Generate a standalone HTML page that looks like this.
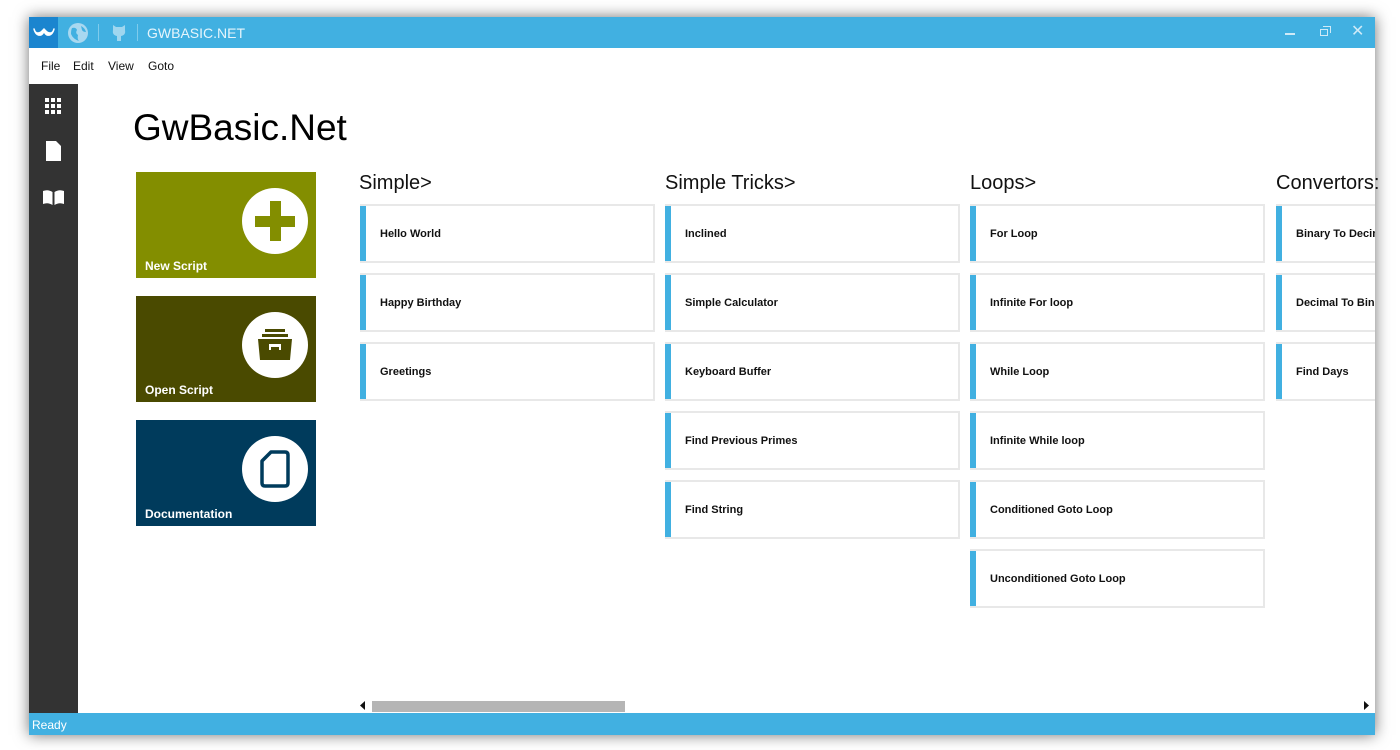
<!DOCTYPE html>
<html><head><meta charset="utf-8"><style>
*{margin:0;padding:0;box-sizing:border-box}
body{width:1400px;height:750px;background:#fff;position:relative;overflow:hidden;font-family:"Segoe UI","Liberation Sans",sans-serif}
.win{position:absolute;left:29px;top:17px;width:1346px;height:718px;background:#fff;box-shadow:0 0 14px rgba(0,0,0,.55)}
.title{position:absolute;left:0;top:0;width:1346px;height:31px;background:#41b0e1}
.menu{position:absolute;top:31px;left:0;height:36px;width:100%;font-size:12px;color:#111}
.menu span{position:absolute;top:11px}
.side{position:absolute;left:0;top:67px;width:49px;height:629px;background:#333}
.status{position:absolute;left:0;top:696px;width:1346px;height:22px;background:#41b0e1;color:#fff;font-size:12px;padding:5px 3px 0}
.abs{position:absolute}
.tile{position:absolute;left:107px;width:180px;height:106px;color:#fff;font-size:12px;font-weight:bold}
.tile .lbl{position:absolute;left:9px;bottom:5px}
.circ{position:absolute;left:106px;top:16px;width:66px;height:66px;border-radius:50%;background:#fff}
.h{position:absolute;top:155px;font-size:20px;color:#111;white-space:nowrap}
.card{position:absolute;width:295px;height:59px;border:2px solid #e8e8e8;border-left:none;background:#fff;font-size:11px;font-weight:bold;color:#111;white-space:nowrap;overflow:hidden}
.card:before{content:"";position:absolute;left:0;top:-2px;bottom:-2px;width:6px;background:#41b0e1}
.card span{position:absolute;left:20px;top:22px}
</style></head><body>
<div class="win">
<div class="title">
 <div class="abs" style="left:0;top:0;width:29px;height:31px;background:#1b85cf"></div>
 <svg class="abs" style="left:4px;top:10px" width="22" height="11" viewBox="0 0 22 11"><path d="M1 2 Q3 9 8 8 Q10 7 11 4 Q12 7 14 8 Q19 9 21 2 Q20 6 17 6 Q14 6 11 2 Q8 6 5 6 Q2 6 1 2Z" fill="#fff" stroke="#fff" stroke-width="1.5" stroke-linejoin="round"/></svg>
 <svg class="abs" style="left:38px;top:5px" width="22" height="22" viewBox="0 0 22 22"><circle cx="11" cy="11" r="10" fill="#a8d8f0"/><path d="M5 6 Q9 5 10 8 Q8 11 11 13 Q10 17 12 19 Q6 17 4 12 Q4 8 5 6Z M14 4 Q18 6 19 10 Q16 10 15 8Z" fill="#41b0e1"/></svg>
 <div class="abs" style="left:69px;top:7px;width:1px;height:17px;background:#7fcbec"></div>
 <svg class="abs" style="left:82px;top:7px" width="16" height="18" viewBox="0 0 16 18"><path d="M2 1 L5 3 H11 L14 1 L14 6 Q15 11 10 12 V17 H6 V12 Q1 11 2 6Z" fill="#9fd6ef"/></svg>
 <div class="abs" style="left:108px;top:7px;width:1px;height:17px;background:#7fcbec"></div>
 <div class="abs" style="left:118px;top:8px;font-size:14px;color:#e6f5fc">GWBASIC.NET</div>
 <div class="abs" style="left:1256px;top:16px;width:10px;height:2px;background:#cfeaf7"></div>
 <div class="abs" style="left:1291px;top:12px;width:8px;height:7px;border:1px solid #cfeaf7"></div>
 <div class="abs" style="left:1294px;top:9px;width:8px;height:7px;border-top:1px solid #cfeaf7;border-right:1px solid #cfeaf7"></div>
 <div class="abs" style="left:1322px;top:4px;font-size:16px;color:#cfeaf7">✕</div>
</div>
<div class="menu"><span style="left:12px">File</span><span style="left:44px">Edit</span><span style="left:79px">View</span><span style="left:119px">Goto</span></div>
<div class="side">
 <svg class="abs" style="left:16px;top:14px" width="17" height="17" viewBox="0 0 17 17" fill="#fff"><rect x="0" y="0" width="4" height="4"/><rect x="6" y="0" width="4" height="4"/><rect x="12" y="0" width="4" height="4"/><rect x="0" y="6" width="4" height="4"/><rect x="6" y="6" width="4" height="4"/><rect x="12" y="6" width="4" height="4"/><rect x="0" y="12" width="4" height="4"/><rect x="6" y="12" width="4" height="4"/><rect x="12" y="12" width="4" height="4"/></svg>
 <svg class="abs" style="left:16px;top:57px" width="17" height="21" viewBox="0 0 17 21"><path d="M1 0 H11 L16 5 V20 H1Z" fill="#fff"/></svg>
 <svg class="abs" style="left:13px;top:104px" width="23" height="18" viewBox="0 0 23 18"><path d="M1 3 Q6 1 10.5 4 V17 Q6 14 1 16Z M12.5 4 Q17 1 22 3 V16 Q17 14 12.5 17Z" fill="#fff"/></svg>
</div>
<div class="abs" style="left:104px;top:90px;font-size:37px;color:#000">GwBasic.Net</div>

<div class="tile" style="top:155px;background:#838e00"><div class="circ"><div class="abs" style="left:28px;top:13px;width:11px;height:40px;background:#838e00"></div><div class="abs" style="left:13px;top:28px;width:40px;height:11px;background:#838e00"></div></div><div class="lbl">New Script</div></div>
<div class="tile" style="top:279px;background:#4a4a00"><div class="circ"><svg class="abs" style="left:15px;top:17px" width="36" height="32" viewBox="0 0 36 32"><rect x="8" y="0" width="20" height="3" fill="#4a4a00"/><rect x="5" y="5" width="26" height="3" fill="#4a4a00"/><path d="M1 10 H35 L33 31 H3Z" fill="#4a4a00"/><rect x="12" y="15" width="12" height="6" fill="#fff"/><rect x="14" y="18" width="8" height="3" fill="#4a4a00"/></svg></div><div class="lbl">Open Script</div></div>
<div class="tile" style="top:403px;background:#003b5c"><div class="circ"><svg class="abs" style="left:18px;top:14px" width="30" height="38" viewBox="0 0 30 38"><path d="M11 2 H25 Q28 2 28 5 V33 Q28 36 25 36 H5 Q2 36 2 33 V11Z" fill="none" stroke="#003b5c" stroke-width="3.5" stroke-linejoin="round"/></svg></div><div class="lbl">Documentation</div></div>

<div class="h" style="left:330px">Simple&gt;</div>
<div class="h" style="left:636px">Simple Tricks&gt;</div>
<div class="h" style="left:941px">Loops&gt;</div>
<div class="h" style="left:1247px">Convertors:</div>

<div class="card" style="left:331px;top:187px"><span>Hello World</span></div>
<div class="card" style="left:331px;top:256px"><span>Happy Birthday</span></div>
<div class="card" style="left:331px;top:325px"><span>Greetings</span></div>

<div class="card" style="left:636px;top:187px"><span>Inclined</span></div>
<div class="card" style="left:636px;top:256px"><span>Simple Calculator</span></div>
<div class="card" style="left:636px;top:325px"><span>Keyboard Buffer</span></div>
<div class="card" style="left:636px;top:394px"><span>Find Previous Primes</span></div>
<div class="card" style="left:636px;top:463px"><span>Find String</span></div>

<div class="card" style="left:941px;top:187px"><span>For Loop</span></div>
<div class="card" style="left:941px;top:256px"><span>Infinite For loop</span></div>
<div class="card" style="left:941px;top:325px"><span>While Loop</span></div>
<div class="card" style="left:941px;top:394px"><span>Infinite While loop</span></div>
<div class="card" style="left:941px;top:463px"><span>Conditioned Goto Loop</span></div>
<div class="card" style="left:941px;top:532px"><span>Unconditioned Goto Loop</span></div>

<div class="card" style="left:1247px;top:187px;width:99px;border-right:none"><span>Binary To Decimal</span></div>
<div class="card" style="left:1247px;top:256px;width:99px;border-right:none"><span>Decimal To Binary</span></div>
<div class="card" style="left:1247px;top:325px;width:99px;border-right:none"><span>Find Days</span></div>

<svg class="abs" style="left:331px;top:684px" width="6" height="9"><path d="M5 0 L0 4.5 L5 9Z" fill="#111"/></svg>
<div class="abs" style="left:343px;top:684px;width:253px;height:11px;background:#b5b5b5"></div>
<svg class="abs" style="left:1335px;top:684px" width="6" height="9"><path d="M0 0 L5 4.5 L0 9Z" fill="#111"/></svg>

<div class="status">Ready</div>
</div>
</body></html>
